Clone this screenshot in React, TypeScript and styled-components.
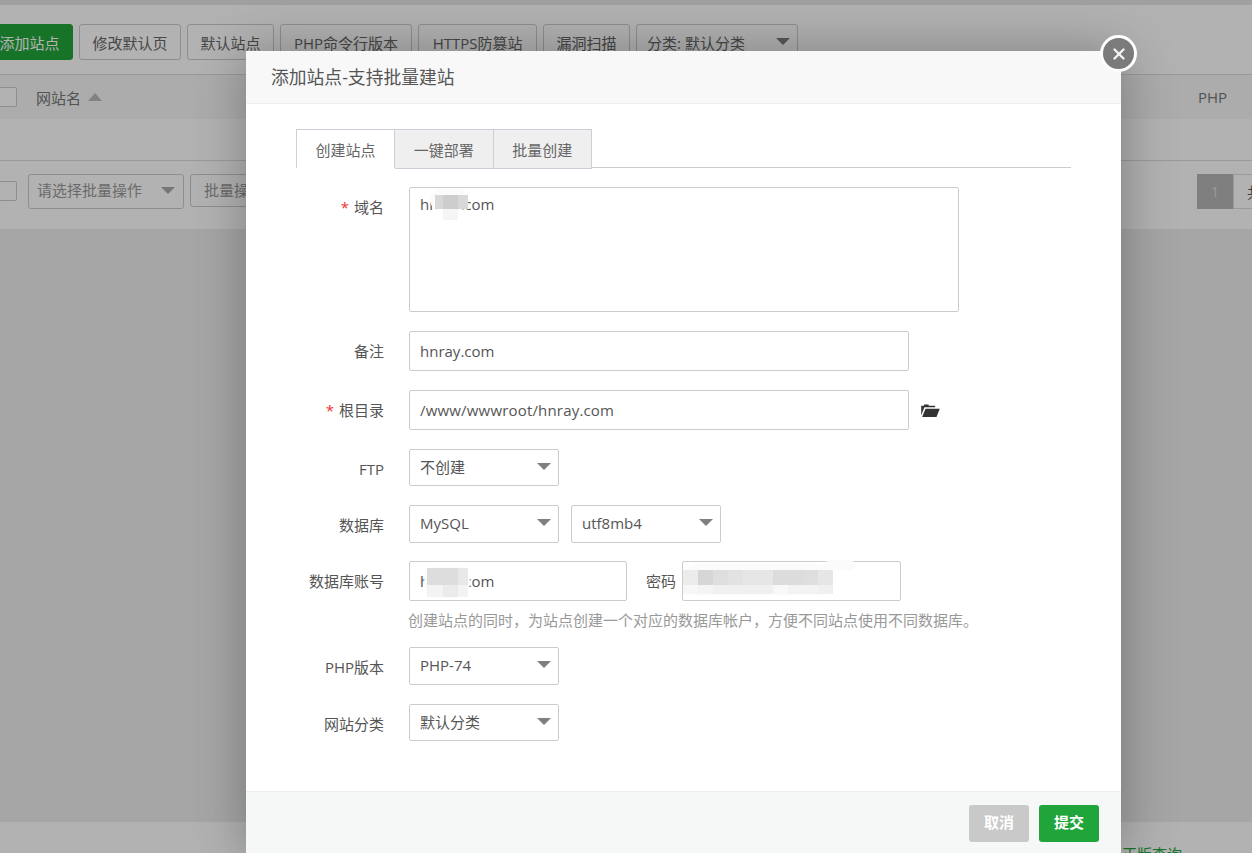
import React from "react";
import styled, { createGlobalStyle } from "styled-components";
import { X } from "lucide-react";

const GlobalStyle = createGlobalStyle`
  html, body {
    margin: 0;
    padding: 0;
    overflow: hidden;
    font-family: "Open Sans", "Noto Sans CJK SC", sans-serif;
    font-size: 15px;
    color: #666;
  }
  * { box-sizing: border-box; }
`;

const Page = styled.div`
  position: relative;
  width: 1252px;
  height: 853px;
  overflow: hidden;
  display: flex;
  flex-direction: column;
  background: #eee;
`;

const TopStrip = styled.div`
  height: 5px;
  background: #e6e6e6;
`;

const Toolbar = styled.div`
  height: 70px;
  display: flex;
  gap: 6px;
  align-items: flex-start;
  padding: 19px 0 0;
  margin-left: -14px;
  background: #fff;
  border-bottom: 1px solid #ddd;
  width: calc(100% + 14px);
`;

const ToolButton = styled.div<{ $primary?: boolean; $width?: number }>`
  height: 36px;
  width: ${(p) => (p.$width ? `${p.$width}px` : "auto")};
  line-height: 36px;
  padding: 0 12.5px;
  text-align: center;
  border-radius: 3px;
  white-space: nowrap;
  border: 1px solid ${(p) => (p.$primary ? "#20a53a" : "#ccc")};
  background: ${(p) => (p.$primary ? "#20a53a" : "transparent")};
  color: ${(p) => (p.$primary ? "#fff" : "#666")};
`;

const Caret = styled.i<{ $dim?: boolean }>`
  position: absolute;
  width: 0;
  height: 0;
  right: ${(p) => (p.$dim ? 8 : 7)}px;
  top: ${(p) => (p.$dim ? 12 : 13)}px;
  border-left: 7px solid transparent;
  border-right: 7px solid transparent;
  border-top: 7px solid ${(p) => (p.$dim ? "#aaa" : "#7f7f7f")};
`;

const ToolSelect = styled(ToolButton)`
  position: relative;
  width: 162px;
  padding: 0 10px;
  text-align: left;
`;

const TableHead = styled.div`
  height: 44px;
  display: flex;
  align-items: center;
  background: #f6f6f6;
  margin-left: -3px;
  padding-right: 25px;
`;

const Check = styled.span`
  flex: none;
  width: 20px;
  height: 20px;
  border: 1px solid #ccc;
  border-radius: 2px;
  background: #fff;
`;

const HeadCell = styled.span`
  margin-left: 19px;
  color: #777;
`;

const SortArrow = styled.i`
  margin-left: 7px;
  width: 0;
  height: 0;
  border-left: 7px solid transparent;
  border-right: 7px solid transparent;
  border-bottom: 8px solid #bbb;
`;

const HeadRight = styled.span`
  margin-left: auto;
  color: #777;
`;

const EmptyRow = styled.div`
  height: 42px;
  background: #fff;
  border-bottom: 1px solid #ddd;
`;

const BatchRow = styled.div`
  height: 68px;
  display: flex;
  align-items: flex-start;
  padding-top: 13px;
  background: #fff;
  margin-left: -3px;
`;

const BatchLeft = styled.div`
  flex: 0 0 1200px;
  display: flex;
  gap: 6px;
  align-items: flex-start;
`;

const BatchCheck = styled(Check)`
  margin: 7px 5px 0 0;
`;

const BatchSelect = styled.div`
  position: relative;
  width: 156px;
  height: 35px;
  line-height: 31px;
  padding-left: 8px;
  border: 1px solid #ccc;
  border-radius: 3px;
  color: #999;
`;

const BatchButton = styled.div`
  height: 33px;
  line-height: 31px;
  padding: 0 13px;
  border: 1px solid #ccc;
  border-radius: 3px;
  color: #999;
`;

const Pager = styled.div`
  display: flex;
  flex: none;
  height: 35px;
  line-height: 35px;
`;

const PageCurrent = styled.span`
  width: 36px;
  text-align: center;
  background: #b6b6b6;
  color: #ddd;
`;

const PageTotal = styled.span`
  padding-left: 13px;
  width: 60px;
  border: 1px solid #ddd;
  color: #555;
`;

const Rest = styled.div`
  flex: 1;
`;

const SiteFooter = styled.div`
  height: 31px;
  background: #fff;
  padding: 22px 0 0 1122px;
  line-height: 20px;
  color: #20a53a;
  white-space: nowrap;
`;

const Overlay = styled.div`
  position: absolute;
  inset: 0;
  background: rgba(0, 0, 0, 0.3);
`;

const Modal = styled.div`
  position: absolute;
  left: 246px;
  top: 51px;
  width: 875px;
  height: 805px;
  display: flex;
  flex-direction: column;
  background: #fff;
  box-shadow: 1px 1px 50px rgba(0, 0, 0, 0.3);
`;

const ModalTitle = styled.div`
  flex: none;
  height: 53px;
  line-height: 52px;
  padding-left: 25px;
  font-size: 17.8px;
  color: #555;
  background: #f8f8f8;
  border-bottom: 1px solid #eee;
`;

const CloseButton = styled.div`
  position: absolute;
  right: -16px;
  top: -16px;
  width: 37px;
  height: 37px;
  display: flex;
  align-items: center;
  justify-content: center;
  border-radius: 50%;
  border: 3px solid #fff;
  background: #7b7b7b;
  color: #f2f2f2;
`;

const ModalBody = styled.div`
  flex: 1;
  padding: 25px 50px 0;
`;

const Tabs = styled.div`
  display: flex;
  height: 39px;
  border-bottom: 1px solid #ccc;
  margin-bottom: 19px;
`;

const Tab = styled.div<{ $active?: boolean }>`
  width: ${(p) => (p.$active ? "99px" : "98.5px")};
  height: ${(p) => (p.$active ? "39px" : "40px")};
  line-height: 41px;
  text-align: center;
  color: #666;
  background: ${(p) => (p.$active ? "#fff" : "#efefef")};
  border: 1px solid #cfcdd8;
  border-left-width: ${(p) => (p.$active ? "1px" : "0")};
  border-bottom-width: ${(p) => (p.$active ? "0" : "1px")};
`;

const Row = styled.div<{ $gap?: number }>`
  display: flex;
  align-items: flex-start;
  margin-bottom: ${(p) => p.$gap ?? 19}px;
`;

const Label = styled.label`
  flex: none;
  width: 88px;
  height: 37px;
  margin-right: 25px;
  line-height: 40px;
  text-align: right;
  color: #555;
  white-space: nowrap;
`;

const Star = styled.span`
  color: #f03030;
  margin-right: 5px;
`;

const Field = styled.div`
  position: relative;
  display: flex;
  align-items: flex-start;
`;

const TextArea = styled.textarea`
  display: block;
  width: 550px;
  height: 125px;
  padding: 5px 10px;
  resize: none;
  outline: none;
  border: 1px solid #ccc;
  border-radius: 2px;
  font: inherit;
  line-height: 22px;
  color: #555;
`;

const Input = styled.input<{ $width: number }>`
  display: block;
  width: ${(p) => p.$width}px;
  height: 40px;
  padding: 0 10px;
  outline: none;
  border: 1px solid #ccc;
  border-radius: 2px;
  font: inherit;
  color: #555;
`;

const PathInput = styled(Input)`
  letter-spacing: 0.18px;
`;

const FolderIcon = styled.svg`
  margin: 14px 0 0 12px;
  width: 19px;
  height: 13px;
  color: #333;
`;

const Select = styled.div<{ $tall?: boolean }>`
  position: relative;
  width: 150px;
  height: ${(p) => (p.$tall ? 38 : 37)}px;
  line-height: 35px;
  padding-left: 10px;
  border: 1px solid #ccc;
  border-radius: 2px;
  color: #555;
`;

const SelectGroup = styled.div`
  display: flex;
  gap: 12px;
`;

const PasswordLabel = styled.span`
  margin: 0 6px 0 19px;
  line-height: 40px;
  color: #555;
`;

const Help = styled.div`
  height: 46px;
  margin-left: 112px;
  padding-top: 9px;
  line-height: 20px;
  color: #999;
  white-space: nowrap;
`;

const ModalFooter = styled.div`
  flex: none;
  height: 65px;
  display: flex;
  justify-content: flex-end;
  gap: 10px;
  padding: 13px 22px 0 0;
  background: #f6f8f8;
  border-top: 1px solid #eee;
`;

const FooterButton = styled.div<{ $primary?: boolean }>`
  width: 60px;
  height: 37px;
  line-height: 34px;
  text-align: center;
  border-radius: 3px;
  font-weight: 700;
  color: #fff;
  background: ${(p) => (p.$primary ? "#20a53a" : "#c9c9c9")};
`;

// privacy smudges painted over the account values in the screenshot
const Smudge = styled.div<{ $left: number; $top: number; $width: number; $height: number; $radius: number }>`
  position: absolute;
  left: ${(p) => p.$left}px;
  top: ${(p) => p.$top}px;
  width: ${(p) => p.$width}px;
  height: ${(p) => p.$height}px;
  border-radius: ${(p) => p.$radius}px;
  background: #fbfbfb;
`;

const Cell = styled.div<{ $left: number; $top: number; $width: number; $height: number; $color: string }>`
  position: absolute;
  left: ${(p) => p.$left}px;
  top: ${(p) => p.$top}px;
  width: ${(p) => p.$width}px;
  height: ${(p) => p.$height}px;
  background: ${(p) => p.$color};
`;

type CellData = [number, number, number, number, string];

const passwordCells: CellData[] = [
  [1, 9, 15, 15, "#ececec"],
  [16, 9, 15, 15, "#d6d6d6"],
  [31, 9, 15, 15, "#dedede"],
  [46, 9, 15, 15, "#e2e2e2"],
  [61, 9, 30, 15, "#e6e6e6"],
  [91, 9, 30, 15, "#dcdcdc"],
  [121, 9, 15, 15, "#dedede"],
  [136, 9, 15, 15, "#e6e6e6"],
  [1, 24, 15, 9, "#f7f7f7"],
  [16, 24, 15, 9, "#f4f4f4"],
  [31, 24, 60, 9, "#f0f0f0"],
  [91, 24, 15, 9, "#f8f8f8"],
  [106, 24, 30, 9, "#f3f3f3"],
  [136, 24, 15, 9, "#f0f0f0"],
];

const accountCells: CellData[] = [
  [18, 7, 31, 17, "#dddddd"],
  [49, 7, 10, 17, "#e8e8e8"],
  [18, 24, 16, 12, "#f3f3f3"],
  [34, 24, 15, 12, "#ebebeb"],
  [49, 24, 10, 12, "#f3f3f3"],
];

const renderCells = (cells: CellData[]) =>
  cells.map(([left, top, width, height, color], i) => (
    <Cell key={i} $left={left} $top={top} $width={width} $height={height} $color={color} />
  ));

export default function App() {
  return (
    <Page>
      <GlobalStyle />
      <TopStrip />
      <Toolbar>
        <ToolButton $primary>添加站点</ToolButton>
        <ToolButton>修改默认页</ToolButton>
        <ToolButton>默认站点</ToolButton>
        <ToolButton $width={132}>PHP命令行版本</ToolButton>
        <ToolButton $width={119}>HTTPS防篡站</ToolButton>
        <ToolButton>漏洞扫描</ToolButton>
        <ToolSelect>
          分类: 默认分类
          <Caret />
        </ToolSelect>
      </Toolbar>
      <TableHead>
        <Check />
        <HeadCell>网站名</HeadCell>
        <SortArrow />
        <HeadRight>PHP</HeadRight>
      </TableHead>
      <EmptyRow />
      <BatchRow>
        <BatchLeft>
          <BatchCheck />
          <BatchSelect>
            请选择批量操作
            <Caret $dim />
          </BatchSelect>
          <BatchButton>批量操作</BatchButton>
        </BatchLeft>
        <Pager>
          <PageCurrent>1</PageCurrent>
          <PageTotal>共</PageTotal>
        </Pager>
      </BatchRow>
      <Rest />
      <SiteFooter>正版查询</SiteFooter>
      <Overlay />

      <Modal>
        <ModalTitle>添加站点-支持批量建站</ModalTitle>
        <CloseButton>
          <X size={18} strokeWidth={3.2} />
        </CloseButton>
        <ModalBody>
          <Tabs>
            <Tab $active>创建站点</Tab>
            <Tab>一键部署</Tab>
            <Tab>批量创建</Tab>
          </Tabs>
          <Row>
            <Label>
              <Star>*</Star>域名
            </Label>
            <Field>
              <TextArea defaultValue="hnray.com" />
              <Smudge $left={21} $top={2} $width={38} $height={22} $radius={12} />
              <Cell $left={34} $top={22} $width={15} $height={11} $color="#f5f5f5" />
              <Cell $left={26} $top={8} $width={8} $height={14} $color="#d8d8d8" />
              <Cell $left={34} $top={8} $width={15} $height={14} $color="#cdcdcd" />
              <Cell $left={49} $top={8} $width={10} $height={14} $color="#d8d8d8" />
            </Field>
          </Row>
          <Row>
            <Label>备注</Label>
            <Input $width={500} defaultValue="hnray.com" />
          </Row>
          <Row>
            <Label>
              <Star>*</Star>根目录
            </Label>
            <PathInput $width={500} defaultValue="/www/wwwroot/hnray.com" />
            <FolderIcon viewBox="0 0 20 14" fill="currentColor">
              <path d="M0 12.5V2h3V.5h5V2h7v1.6H3.4L0 12.5Z" />
              <path d="M4.6 5H20l-3.6 9H1l3.6-9Z" />
            </FolderIcon>
          </Row>
          <Row>
            <Label>FTP</Label>
            <Select>
              不创建
              <Caret />
            </Select>
          </Row>
          <Row $gap={18}>
            <Label>数据库</Label>
            <SelectGroup>
              <Select $tall>
                MySQL
                <Caret />
              </Select>
              <Select $tall>
                utf8mb4
                <Caret />
              </Select>
            </SelectGroup>
          </Row>
          <Row $gap={0}>
            <Label>数据库账号</Label>
            <Field>
              <Input $width={218} defaultValue="hnray.com" />
              <Smudge $left={15} $top={6} $width={46} $height={31} $radius={16} />
              {renderCells(accountCells)}
            </Field>
            <PasswordLabel>密码</PasswordLabel>
            <Field>
              <Input $width={219} />
              <Smudge $left={1} $top={3} $width={150} $height={31} $radius={14} />
              <Smudge $left={143} $top={-1} $width={30} $height={10} $radius={5} />
              {renderCells(passwordCells)}
            </Field>
          </Row>
          <Help>创建站点的同时，为站点创建一个对应的数据库帐户，方便不同站点使用不同数据库。</Help>
          <Row>
            <Label>PHP版本</Label>
            <Select $tall>
              PHP-74
              <Caret />
            </Select>
          </Row>
          <Row>
            <Label>网站分类</Label>
            <Select>
              默认分类
              <Caret />
            </Select>
          </Row>
        </ModalBody>
        <ModalFooter>
          <FooterButton>取消</FooterButton>
          <FooterButton $primary>提交</FooterButton>
        </ModalFooter>
      </Modal>
    </Page>
  );
}
